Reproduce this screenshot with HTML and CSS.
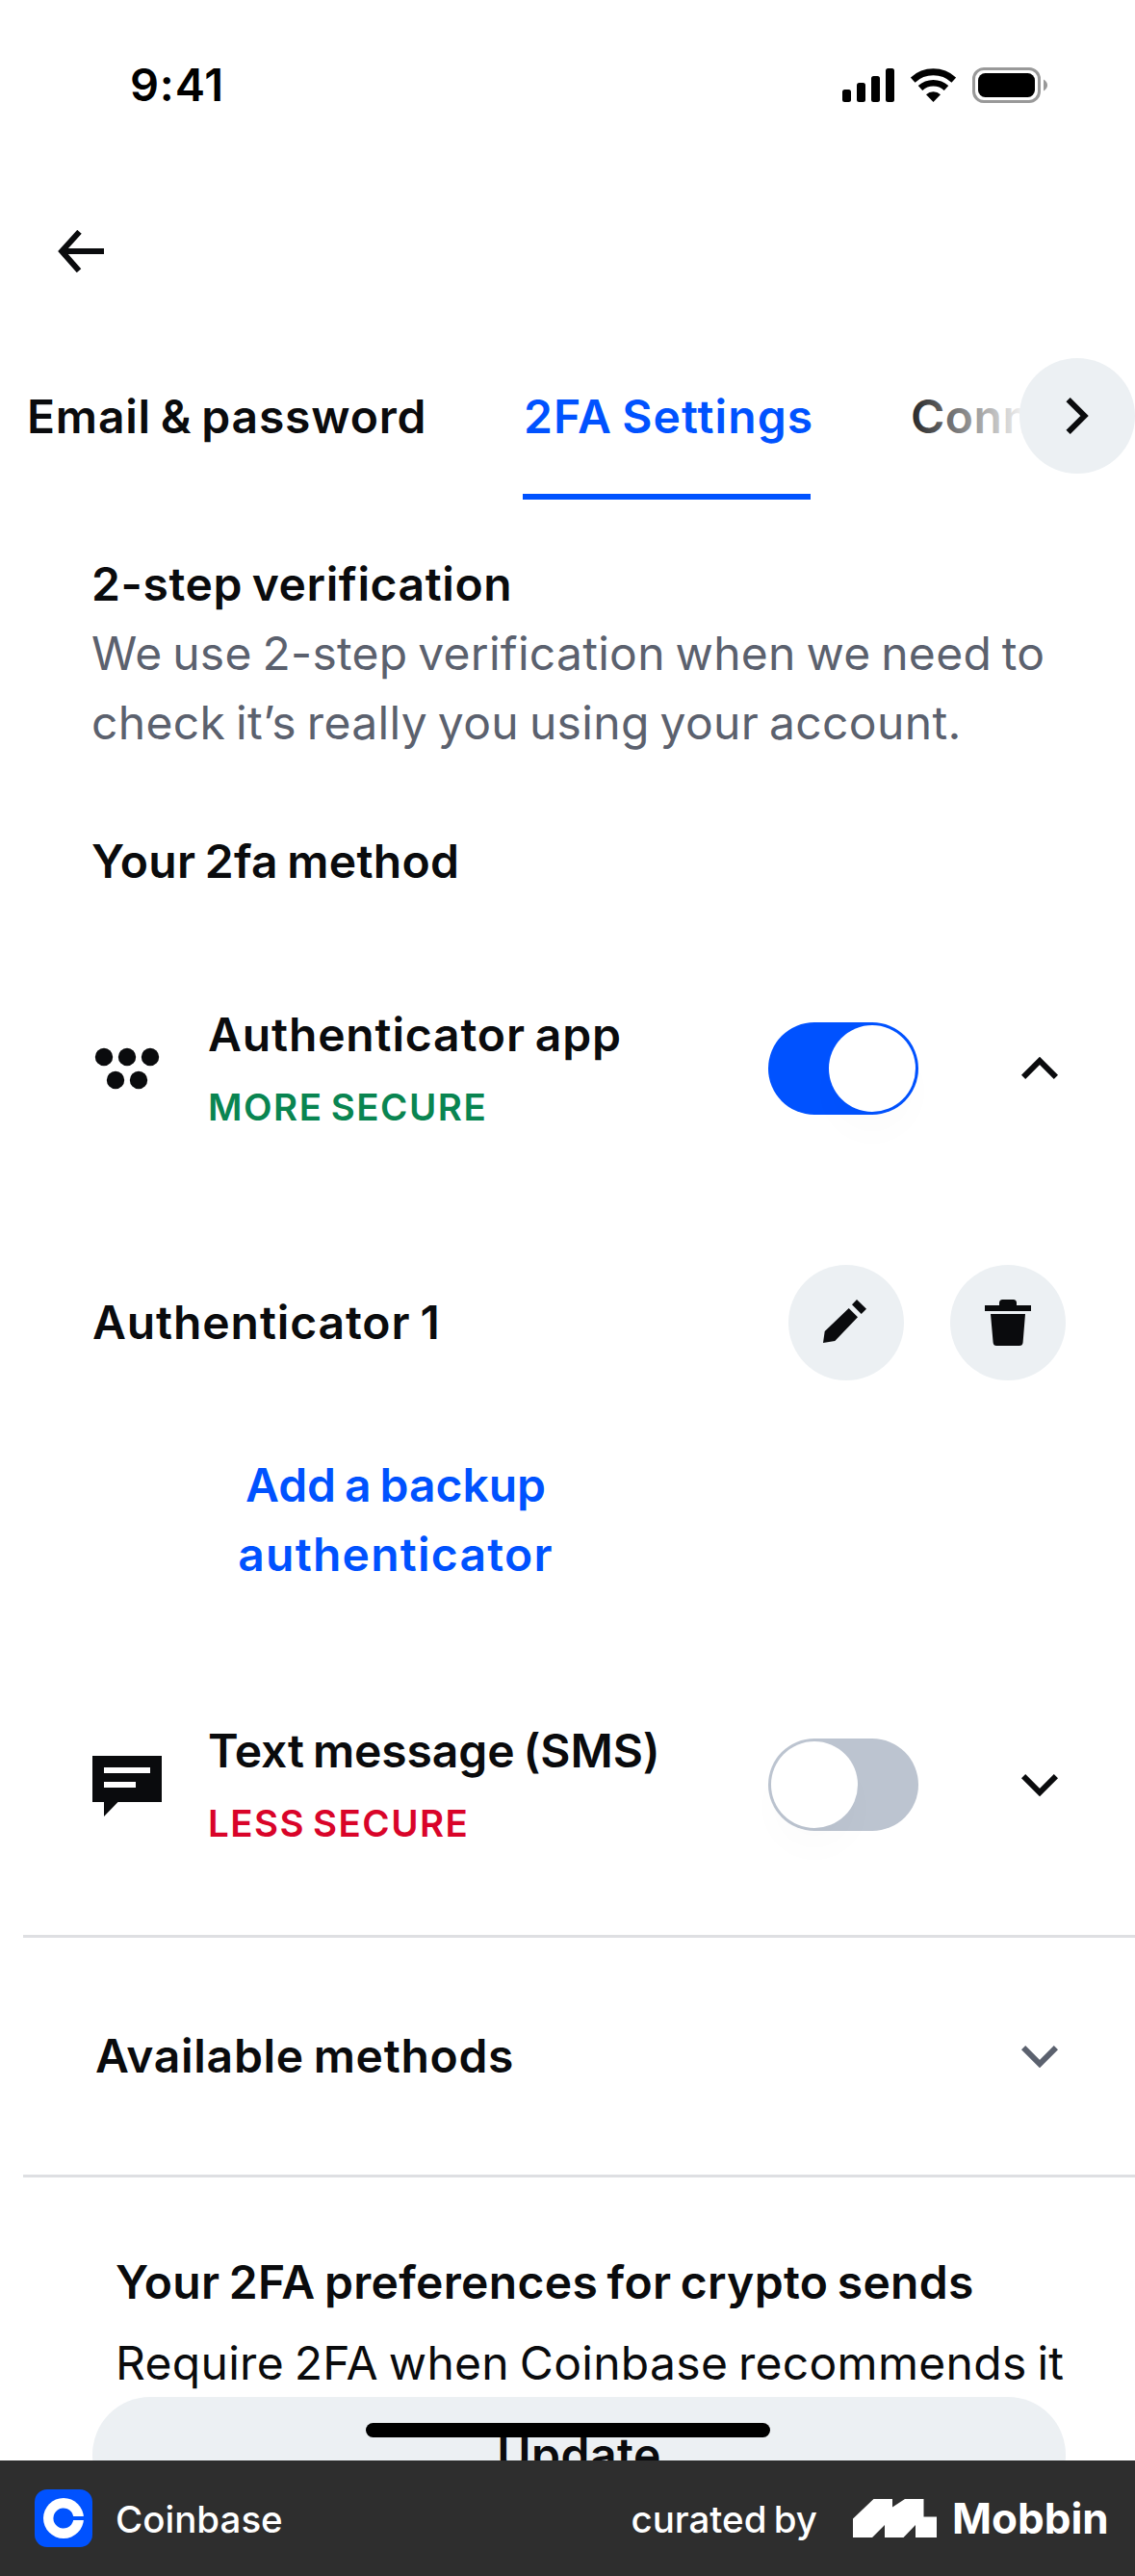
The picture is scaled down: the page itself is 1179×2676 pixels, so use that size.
FILE: index.html
```html
<!DOCTYPE html>
<html lang="en">
<head>
<meta charset="utf-8">
<title>2FA Settings</title>
<link rel="stylesheet" href="styles.css">
</head>
<body>
<div class="screen">
  <header class="status">
    <span class="time">9:41</span>
    <div class="status-icons">
      <svg width="54" height="35" viewBox="0 0 54 35"><rect x="0" y="22" width="9" height="13" rx="2.5"/><rect x="15" y="15" width="9" height="20" rx="2.5"/><rect x="30" y="8" width="9" height="27" rx="2.5"/><rect x="45" y="0" width="9" height="35" rx="2.5"/></svg>
      <svg width="47" height="35" viewBox="0 0 47 35"><g fill="none" stroke="#000"><path stroke-width="7" d="M2.2 12.2A31.4 31.4 0 0 1 44.8 12.2"/><path stroke-width="6.6" d="M10 20.5A19.8 19.8 0 0 1 37 20.5"/></g><path d="M23.5 35L16 27.2A11 11 0 0 1 31 27.2Z"/></svg>
      <svg width="78" height="37" viewBox="0 0 78 37"><rect x="1.5" y="1.5" width="68" height="34" rx="10.5" fill="none" stroke="#999" stroke-width="3"/><rect x="6" y="6" width="59" height="25" rx="7.5"/><path fill="#999" d="M74 12.5Q78 15 78 18.5T74 24.500Z"/></svg>
    </div>
  </header>

  <nav class="topbar">
    <svg width="48" height="44" viewBox="0 0 48 44"><path d="M22.500 1.800L4.200 22L22 42.200M4 22H48"/></svg>
  </nav>

  <div class="tabs">
    <span class="tab tab-email">Email &amp; password</span>
    <span class="tab tab-active">2FA Settings</span>
    <span class="tab tab-next">Conn</span>
    <div class="tabs-fade"></div>
    <button class="round tabs-more"><svg width="24" height="38" viewBox="0 0 24 38"><path d="M2.600 2.100L19.500 19L2.600 35.900"/></svg></button>
  </div>

  <main>
    <section class="intro">
      <h2 class="title">2-step verification</h2>
      <p class="lead"><span class="lead-a">We use 2-step verification when we need to</span><br><span class="lead-b">check it’s really you using your account.</span></p>
      <h3 class="subtitle">Your 2fa method</h3>
    </section>

    <section class="method method-app">
      <svg class="method-icon" width="72" height="72" viewBox="0 0 72 72"><circle cx="12" cy="24" r="9.200"/><circle cx="36" cy="24" r="9.200"/><circle cx="60" cy="24" r="9.200"/><circle cx="24" cy="48" r="9.200"/><circle cx="48" cy="48" r="9.200"/></svg>
      <div class="method-text"><span class="name name-app">Authenticator app</span><span class="tag tag-more">MORE SECURE</span></div>
      <span class="toggle toggle-on"><i class="knob"></i></span>
      <svg class="chevron" width="38" height="24" viewBox="0 0 38 24"><path d="M2.100 20.900L19 4L35.900 20.900"/></svg>
    </section>

    <section class="device">
      <span class="device-name">Authenticator 1</span>
      <button class="round"><svg width="120" height="120" viewBox="0 0 120 120"><path d="M62.700 45L72 54.300L48.300 79L36 81L37.700 69Z M71 36L81 45.700L75.700 51L66 41.300Z"/></svg></button>
      <button class="round"><svg width="120" height="120" viewBox="0 0 120 120"><path d="M36 42H51V39.500Q51 36 54.500 36H65.500Q69 36 69 39.500V42H84V48H36Z M42 51H78L75.600 80.500Q75.300 84 71.800 84H48.200Q44.900 84 44.600 80.500Z"/></svg></button>
    </section>

    <a class="backup"><span class="backup-a">Add a backup</span><span class="backup-b">authenticator</span></a>

    <section class="method method-sms">
      <svg class="method-icon" width="72" height="72" viewBox="0 0 72 72"><path fill-rule="evenodd" d="M0 6H72V54H26.500L12 69V54H0ZM12 18V24H60V18ZM12 33V39H45V33Z"/></svg>
      <div class="method-text"><span class="name name-sms">Text message (SMS)</span><span class="tag tag-less">LESS SECURE</span></div>
      <span class="toggle toggle-off"><i class="knob"></i></span>
      <svg class="chevron" width="38" height="24" viewBox="0 0 38 24"><path d="M2.100 3.100L19 20L35.900 3.100"/></svg>
    </section>

    <section class="available">
      <span class="available-name">Available methods</span>
      <svg class="chevron chevron-muted" width="38" height="24" viewBox="0 0 38 24"><path d="M2.100 3.100L19 20L35.900 3.100"/></svg>
    </section>

    <section class="prefs">
      <h3 class="prefs-title">Your 2FA preferences for crypto sends</h3>
      <p class="prefs-text">Require 2FA when Coinbase recommends it</p>
    </section>
    <button class="update">Update</button>
  </main>
  <div class="home-bar"></div>
</div>

<footer class="footer">
  <svg width="60" height="60" viewBox="0 0 60 60"><rect width="60" height="60" rx="13" fill="#0052ff"/><circle cx="30" cy="30" r="21" fill="#fff"/><path fill="#0052ff" d="M40.200 28A10.500 10.500 0 1 0 40.200 32H52V28Z"/></svg>
  <span class="app-name">Coinbase</span>
  <span class="curated">curated by</span>
  <svg class="mobbin-mark" width="87" height="40" viewBox="0 0 87 40"><path fill="#fff" d="M0 20.500L21.500 0H41V8.500L54 0H73.500V18.500H87V40H65V27L52.500 40H33V27L20 40H0Z"/></svg>
  <span class="mobbin">Mobbin</span>
</footer>
</body>
</html>
```
FILE: styles.css
```css
* { box-sizing: border-box; }
body { margin: 0; background: #fff; color: #0a0b0d; font-family: Inter, "Liberation Sans", sans-serif; font-size: 48px; line-height: 72px; word-spacing: -3px; width: 1179px; }
h2, h3, p { margin: 0; font-size: inherit; }
svg { display: block; flex: none; }
button { border: 0; padding: 0; color: inherit; font: inherit; }
span { white-space: nowrap; }

.screen { position: relative; height: 2556px; overflow: hidden; }

.status { height: 176px; padding: 0 91px 0 135px; display: flex; align-items: center; justify-content: space-between; color: #000; }
.time { font-size: 47px; font-weight: 600; letter-spacing: .8px; }
.status-icons { display: flex; align-items: center; gap: 17px; }

.topbar { height: 170px; padding-left: 60px; display: flex; align-items: center; }
.topbar path, .chevron path, .tabs-more path { fill: none; stroke: #0a0b0d; stroke-width: 6px; }

.tabs { position: relative; display: flex; height: 173px; padding: 51px 0 0 28px; overflow: hidden; font-weight: 600; }
.tab { flex: none; height: 122px; }
.tab-email { width: 515px; letter-spacing: .8px; }
.tab-active { width: 299px; padding-left: 1px; border-bottom: 6px solid #0052ff; color: #0052ff; letter-spacing: 1.1px; }
.tab-next { padding-left: 104px; letter-spacing: .5px; }
.tabs-fade { position: absolute; top: 0; right: 0; width: 249px; height: 160px; background: linear-gradient(to right, rgba(255,255,255,0), #fff 56%); }
.round { flex: none; width: 120px; height: 120px; border-radius: 50%; background: #ecf0f3; display: flex; align-items: center; justify-content: center; }
.round svg { fill: #0a0b0d; }
.tabs-more { position: absolute; right: 0; top: 26px; }

.intro { padding: 52px 72px 0 95px; }
.title { font-weight: 600; letter-spacing: .6px; }
.lead { color: #5b616e; }
.lead-a { letter-spacing: .28px; }
.lead-b { letter-spacing: .34px; }
.subtitle { margin-top: 72px; font-weight: 600; letter-spacing: .3px; }

.method { display: flex; align-items: center; height: 142px; padding-left: 96px; }
.method-app { margin-top: 108px; }
.method-sms { margin-top: 132px; }
.method-icon { fill: #0a0b0d; }
.method-text { display: flex; flex: none; flex-direction: column; align-self: flex-start; gap: 15px; width: 582px; margin-left: 48px; }
.name { font-weight: 600; }
.name-app { letter-spacing: .85px; }
.name-sms { letter-spacing: -.1px; }
.tag { font-size: 38.5px; line-height: 48px; font-weight: 600; }
.tag-more { color: #098551; letter-spacing: 1.5px; }
.tag-less { color: #d90429; letter-spacing: 1.45px; }
.toggle { flex: none; display: flex; width: 156px; height: 96px; padding: 3px; border-radius: 48px; }
.toggle-on { background: #0052ff; justify-content: flex-end; }
.toggle-off { background: #bcc4d0; }
.knob { width: 90px; height: 90px; border-radius: 50%; background: #fff; box-shadow: 0 24px 36px rgba(0,0,0,.015); }
.toggle + .chevron { margin-left: 107px; }

.device { display: flex; align-items: center; gap: 48px; margin-top: 133px; padding: 0 72px 0 96px; }
.device-name { flex: 1; font-weight: 600; letter-spacing: .9px; }

.backup { display: flex; flex-direction: column; align-items: center; width: 630px; margin: 73px 0 0 96px; color: #0052ff; font-weight: 600; }
.backup-a { letter-spacing: -.05px; }
.backup-b { letter-spacing: 1.25px; }

.available { display: flex; align-items: center; justify-content: space-between; height: 252px; margin: 85px 0 0 24px; padding: 0 80px 0 75px; border-top: 3px solid #dedfe2; border-bottom: 3px solid #dedfe2; font-weight: 600; letter-spacing: .7px; }
.chevron-muted path { stroke: #5b616e; }

.prefs { padding: 73px 0 0 120px; white-space: nowrap; }
.prefs-title { font-weight: 600; letter-spacing: .32px; }
.prefs-text { margin-top: 12px; letter-spacing: .3px; }
.update { display: block; width: 1011px; height: 120px; margin: -1px 0 0 96px; border-radius: 60px; background: #ecf0f3; font-weight: 600; letter-spacing: .5px; line-height: 120px; text-align: center; }
.home-bar { position: absolute; left: 380px; bottom: 24px; width: 420px; height: 15px; border-radius: 8px; background: #000; }

.footer { display: flex; align-items: center; height: 120px; padding-left: 36px; background: #2e2e2e; color: #fff; font-size: 38.5px; font-weight: 500; }
.app-name { margin-left: 24px; padding-top: 2px; }
.curated { margin-left: auto; padding-top: 2px; letter-spacing: 0; }
.mobbin-mark { margin-left: 37px; }
.mobbin { width: 190px; margin-left: 16px; font-size: 44px; font-weight: 700; letter-spacing: 0; }
```
